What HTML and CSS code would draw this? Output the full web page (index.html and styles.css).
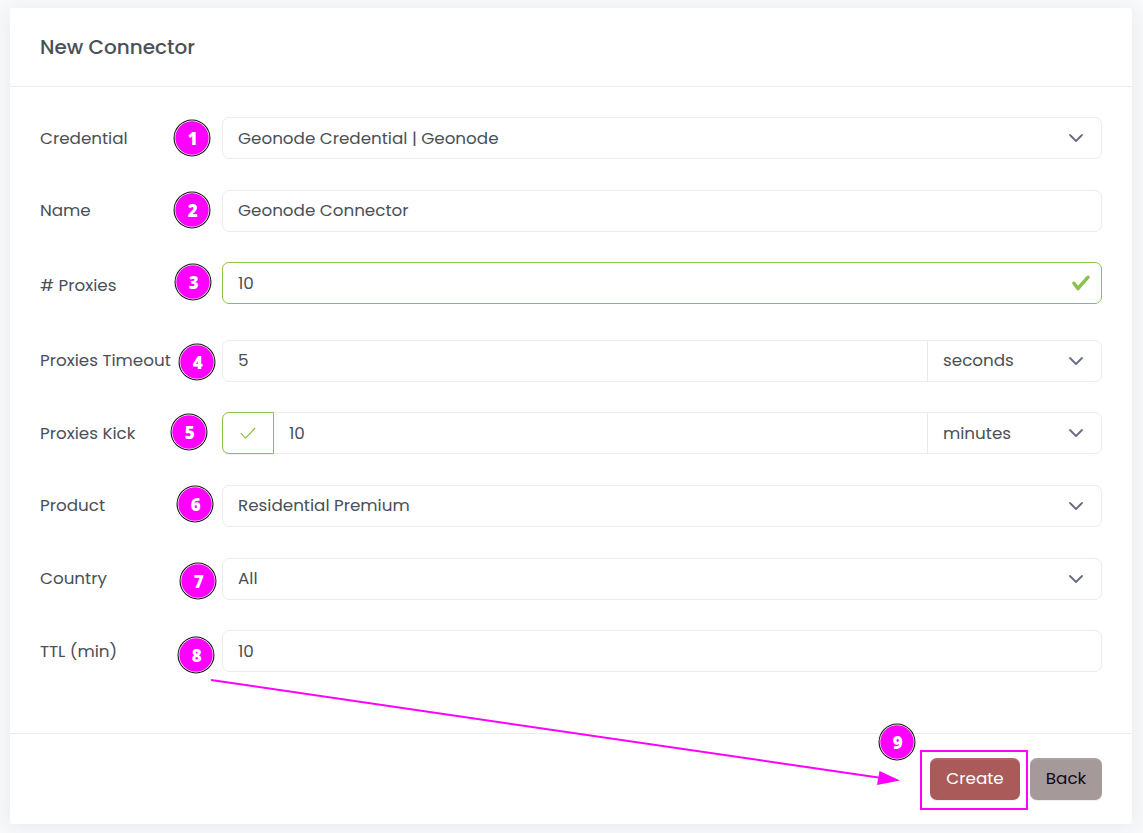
FILE: index.html
```html
<!DOCTYPE html>
<html lang="en">
<head>
<meta charset="utf-8">
<title>New Connector</title>
<link rel="stylesheet" href="styles.css">
</head>
<body>
<main class="card">
  <header class="card-header"><h1 class="title">New Connector</h1></header>
  <form class="card-body">
    <div class="row low">
      <label class="label">Credential</label>
      <div class="field"><span class="value">Geonode Credential | Geonode</span><svg class="chevron" viewBox="0 0 16 16"><path d="M2 5l6 6 6-6"/></svg></div>
    </div>
    <div class="row row-name">
      <label class="label">Name</label>
      <div class="field"><span class="value">Geonode Connector</span></div>
    </div>
    <div class="row row-proxies low">
      <label class="label label-low">#&nbsp;Proxies</label>
      <div class="field valid"><span class="value">10</span><svg class="valid-icon" viewBox="0 0 8 8"><path d="M2.3 6.73L.6 4.53c-.4-1.04.46-1.4 1.1-.8l1.1 1.4 3.4-3.8c.6-.63 1.6-.27 1.2.7l-4 4.6c-.43.5-.8.4-1.1.1z"/></svg></div>
    </div>
    <div class="row row-timeout">
      <label class="label">Proxies Timeout</label>
      <div class="field group"><span class="cell grow"><span class="value">5</span></span><span class="cell unit"><span class="value">seconds</span><svg class="chevron" viewBox="0 0 16 16"><path d="M2 5l6 6 6-6"/></svg></span></div>
    </div>
    <div class="row row-kick low">
      <label class="label">Proxies Kick</label>
      <div class="field group kick"><span class="toggle"><svg class="tick" viewBox="0 0 16 14"><path d="M.8 7.2l4.7 5L15.2 2"/></svg></span><span class="cell grow"><span class="value">10</span></span><span class="cell unit"><span class="value">minutes</span><svg class="chevron" viewBox="0 0 16 16"><path d="M2 5l6 6 6-6"/></svg></span></div>
    </div>
    <div class="row row-product">
      <label class="label">Product</label>
      <div class="field"><span class="value">Residential Premium</span><svg class="chevron" viewBox="0 0 16 16"><path d="M2 5l6 6 6-6"/></svg></div>
    </div>
    <div class="row row-country">
      <label class="label">Country</label>
      <div class="field"><span class="value">All</span><svg class="chevron" viewBox="0 0 16 16"><path d="M2 5l6 6 6-6"/></svg></div>
    </div>
    <div class="row row-ttl low">
      <label class="label">TTL (min)</label>
      <div class="field"><span class="value">10</span></div>
    </div>
  </form>
  <footer class="card-footer">
    <button class="btn create" type="button">Create</button>
    <button class="btn back" type="button">Back</button>
  </footer>
</main>
<svg class="annotations" viewBox="0 0 1143 833">
  <path class="arrow-line" d="M211 680L880 777.8"/>
  <path class="arrow-head" d="M879.500 771L900 780.500L877 785z"/>
  <rect class="highlight" x="921" y="751" width="106" height="58"/>
  <g class="badge" transform="translate(192 138)"><circle class="ring" r="18.500"/><circle class="halo" r="17.400"/><circle class="disc" r="16.700"/><text x=".7" y="7">1</text></g>
  <g class="badge" transform="translate(192 210)"><circle class="ring" r="18.500"/><circle class="halo" r="17.400"/><circle class="disc" r="16.700"/><text x=".7" y="7">2</text></g>
  <g class="badge" transform="translate(193 282)"><circle class="ring" r="18.500"/><circle class="halo" r="17.400"/><circle class="disc" r="16.700"/><text x=".7" y="7">3</text></g>
  <g class="badge" transform="translate(197 362)"><circle class="ring" r="18.500"/><circle class="halo" r="17.400"/><circle class="disc" r="16.700"/><text x=".7" y="7">4</text></g>
  <g class="badge" transform="translate(189 432)"><circle class="ring" r="18.500"/><circle class="halo" r="17.400"/><circle class="disc" r="16.700"/><text x=".7" y="7">5</text></g>
  <g class="badge" transform="translate(195 504)"><circle class="ring" r="18.500"/><circle class="halo" r="17.400"/><circle class="disc" r="16.700"/><text x=".7" y="7">6</text></g>
  <g class="badge" transform="translate(198 581)"><circle class="ring" r="18.500"/><circle class="halo" r="17.400"/><circle class="disc" r="16.700"/><text x=".7" y="7">7</text></g>
  <g class="badge" transform="translate(196 655)"><circle class="ring" r="18.500"/><circle class="halo" r="17.400"/><circle class="disc" r="16.700"/><text x=".7" y="7">8</text></g>
  <g class="badge" transform="translate(897 742)"><circle class="ring" r="18.500"/><circle class="halo" r="17.400"/><circle class="disc" r="16.700"/><text x=".7" y="7">9</text></g>
</svg>
</body>
</html>
```
FILE: styles.css
```css
* { box-sizing: border-box; }
body {
  margin: 0;
  height: 833px;
  padding: 8px 11px 9px 10px;
  overflow: hidden;
  background: #f8f9fb;
  color: #495057;
  font: 16.750px/24px Poppins, Inter, sans-serif;
}
.card {
  display: flex;
  flex-direction: column;
  height: 816px;
  background: #fff;
  border-radius: 3px;
  box-shadow: 0 3px 20px rgba(50, 55, 65, .08);
}
.card-header { height: 79px; padding: 26px 30px; border-bottom: 1px solid #ebecec; }
.title { margin: 0; font-size: 20px; line-height: 26px; font-weight: 500; }
.card-body { flex: 1; padding: 30px 30px 0; }
.row { display: grid; grid-template-columns: 182px 1fr; height: 42px; }
.row-name, .row-product, .row-country { margin-top: 31px; }
.row-proxies, .row-kick, .row-ttl { margin-top: 30px; }
.row-timeout { margin-top: 36px; }
.label { align-self: center; white-space: nowrap; }
.label, .value { padding-bottom: 2px; }
.low .label, .low .value { padding-top: 1px; }
.low .label-low { padding-top: 5px; }
.field {
  display: flex;
  align-items: center;
  justify-content: space-between;
  height: 42px;
  padding: 0 17px 0 15px;
  border: 1px solid #ebecee;
  border-radius: 7px;
  white-space: nowrap;
}
.valid { border-color: #8bc34a; padding-right: 10px; }
.valid-icon { width: 20px; height: 20px; margin-bottom: 1px; fill: #8bc34a; }
.group { padding: 0; }
.cell { display: flex; align-items: center; height: 40px; padding-left: 15px; }
.grow { flex: 1; }
.unit { justify-content: space-between; width: 174px; padding-right: 17px; border-left: 1px solid #e9eaef; }
.toggle {
  display: flex;
  align-items: center;
  justify-content: center;
  width: 52px;
  height: 42px;
  margin-left: -1px;
  border: 1px solid #8bc34a;
  border-radius: 7px 0 0 7px;
  box-shadow: 0 1px 1px rgba(0, 0, 0, .06);
}
.tick { width: 16px; height: 14px; fill: none; stroke: #8bc34a; stroke-width: 1.200; }
.chevron { width: 16px; height: 16px; margin-bottom: 1px; fill: none; stroke: #676c85; stroke-width: 1.800; stroke-linecap: round; stroke-linejoin: round; }
.low .chevron { margin-bottom: 0; }
.card-footer { display: flex; justify-content: flex-end; gap: 10px; height: 91px; padding: 24px 30px; border-top: 1px solid #ebecec; }
.btn {
  height: 42px;
  padding: 0 0 2px;
  border: 0;
  border-radius: 7px;
  font: inherit;
  box-shadow: inset 0 2px 0 rgba(255, 255, 255, .07), 0 1px 1px rgba(0, 0, 0, .07);
}
.create { width: 90px; background: #aa5b59; color: #fff; }
.back { width: 72px; background: #a59999; color: #0c0a1c; }
.annotations { position: absolute; left: 0; top: 0; width: 1143px; height: 833px; pointer-events: none; }
.arrow-line { stroke: #f0f; stroke-width: 2; }
.arrow-head { fill: #f0f; }
.highlight { fill: none; stroke: #f0f; stroke-width: 2; }
.ring { fill: #111; }
.halo { fill: #fff; }
.disc { fill: #f0f; }
.badge text { fill: #fff; font: 800 17px "Open Sans", sans-serif; text-anchor: middle; }
```
